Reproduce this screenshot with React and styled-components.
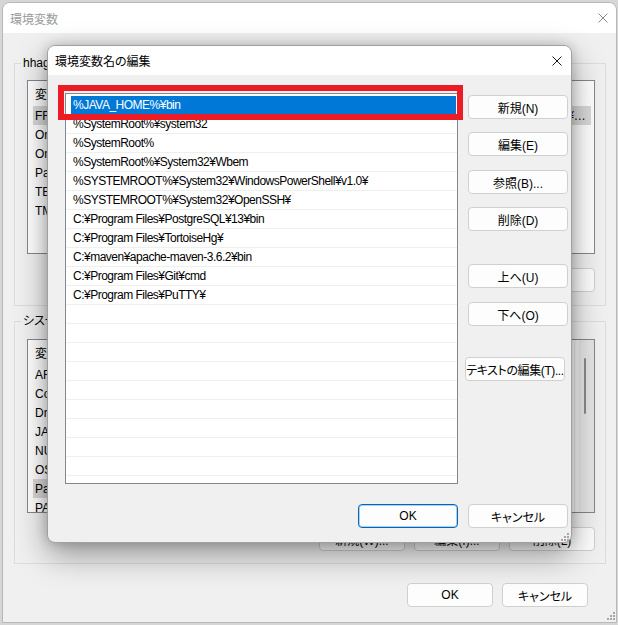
import React from "react";
import styled, { createGlobalStyle } from "styled-components";

const GlobalStyle = createGlobalStyle`
  html, body { margin: 0; padding: 0; }
  body {
    background: #d6d6d6;
    width: 618px;
    height: 625px;
    overflow: hidden;
    font-family: "Liberation Sans", "Noto Sans CJK JP", sans-serif;
    font-size: 12px;
    color: #000;
    font-feature-settings: "palt";
  }
  * { box-sizing: border-box; }
  button { font-feature-settings: "palt"; }
`;

const Desktop = styled.div`
  position: relative;
  width: 618px;
  height: 625px;
  padding: 2px 0 0 2px;
  overflow: hidden;
`;

const Window = styled.div`
  width: 615px;
  height: 621px;
  border: 1px solid #b8b8b8;
  border-radius: 8px 8px 0 0;
  background: #f0f0f0;
  display: flex;
  flex-direction: column;
  overflow: hidden;
  position: relative;
`;

const TitleBar = styled.div`
  flex: none;
  height: ${(p) => p.$h}px;
  background: #fff;
  display: flex;
  align-items: center;
  justify-content: space-between;
  padding: 0 ${(p) => p.$padR}px 0 ${(p) => p.$padL}px;
  color: ${(p) => (p.$inactive ? "#9a9a9a" : "#000")};
  font-family: "Noto Sans CJK JP", sans-serif;
  font-size: 12px;
`;

const WinBody = styled.div`
  flex: 1;
  display: flex;
  flex-direction: column;
  padding: 23px 10px 0 11px;
`;

const Group = styled.fieldset`
  margin: ${(p) => p.$mt}px 0 0;
  padding: ${(p) => p.$pt}px 10px ${(p) => p.$pb}px 12px;
  border: 1px solid #dcdcdc;
  min-width: 0;
  display: flex;
  flex-direction: column;
`;

const Legend = styled.legend`
  margin-left: -6px;
  padding: 0 2px;
  font-size: 12px;
  line-height: 14px;
  font-family: "Liberation Sans", "Noto Sans CJK JP", sans-serif;
`;

const BgList = styled.div`
  height: 174px;
  border: 1px solid #828790;
  background: #fff;
  display: flex;
  overflow: hidden;
`;

const BgListBody = styled.div`
  flex: 1;
  min-width: 0;
  display: flex;
  flex-direction: column;
`;

const BgHeader = styled.div`
  flex: none;
  height: 25px;
  display: flex;
  align-items: center;
  padding-left: 7px;
  font-family: "Noto Sans CJK JP", sans-serif;
`;

const BgRow = styled.div`
  flex: none;
  height: 19px;
  margin: 0 3px 0 5px;
  padding-left: 2px;
  display: flex;
  align-items: center;
  background: ${(p) => (p.$sel ? "#d9d9d9" : "transparent")};
  white-space: nowrap;
`;

const NameCol = styled.div`
  width: 200px;
  flex: none;
  overflow: hidden;
`;

const ValueCol = styled.div`
  flex: 1;
  min-width: 0;
  overflow: hidden;
  text-overflow: ellipsis;
  padding-right: 2px;
`;

const ScrollTrack = styled.div`
  flex: none;
  width: 20px;
  background: linear-gradient(to right, #f7f7f7 0, #f7f7f7 3px, #e8e8e8 4px, #e4e4e4 100%);
  border-left: 1px solid #ececec;
  display: flex;
  justify-content: center;
  padding-top: 18px;
`;

const Thumb = styled.div`
  width: 2px;
  height: 56px;
  border-radius: 1px;
  background: #8a8a8a;
`;

const BtnRow = styled.div`
  display: flex;
  justify-content: flex-end;
  gap: 9px;
  margin-top: ${(p) => p.$mt}px;
  padding-right: ${(p) => p.$pr || 0}px;
`;

const BgButton = styled.button`
  width: 86px;
  height: 24px;
  border: 1px solid #d0d0d0;
  border-radius: 4px;
  background: #fdfdfd;
  font-family: "Liberation Sans", "Noto Sans CJK JP", sans-serif;
  font-size: 12px;
  color: #000;
  padding: 0;
`;

const Dialog = styled.div`
  position: absolute;
  left: 47px;
  top: 45px;
  width: 525px;
  height: 498px;
  border: 1px solid #a0a0a0;
  border-radius: 8px;
  background: #f0f0f0;
  overflow: hidden;
  display: flex;
  flex-direction: column;
  box-shadow: 0 12px 32px rgba(0, 0, 0, 0.38), 0 0 12px rgba(0, 0, 0, 0.18);
`;

const DialogBody = styled.div`
  position: relative;
  flex: 1;
  display: grid;
  grid-template-columns: 393px 100px;
  grid-template-rows: 391px 24px;
  column-gap: 10px;
  row-gap: 20px;
  padding: 18px 0 0 17px;
  align-content: start;
`;

const ListView = styled.div`
  border: 1px solid #828790;
  background: #fff;
  padding-top: 2px;
  overflow: hidden;
  display: flex;
  flex-direction: column;
`;

const PathRow = styled.div`
  flex: none;
  height: 19px;
  border-bottom: 1px solid #efefef;
  display: flex;
`;

const PathCell = styled.div`
  flex: 1;
  height: 18px;
  margin: 0 1px 0 5px;
  padding-left: 2px;
  line-height: 19px;
  white-space: nowrap;
  letter-spacing: -0.5px;
  background: ${(p) => (p.$sel ? "#0078d7" : "transparent")};
  color: ${(p) => (p.$sel ? "#fff" : "#000")};
`;

const ButtonColumn = styled.div`
  display: flex;
  flex-direction: column;
  padding-top: 2px;
`;

const DlgButton = styled.button`
  flex: none;
  width: 100px;
  height: 24px;
  margin-top: ${(p) => p.$mt || 0}px;
  margin-left: ${(p) => p.$shift || 0}px;
  border: 1px solid ${(p) => (p.$primary ? "#0067c0" : "#d0d0d0")};
  box-shadow: ${(p) => (p.$primary ? "inset 0 0 0 1px rgba(0,103,192,0.3)" : "none")};
  border-radius: 4px;
  background: #fdfdfd;
  font-family: "Liberation Sans", "Noto Sans CJK JP", sans-serif;
  font-size: 12px;
  letter-spacing: ${(p) => (p.$tight ? "-0.4px" : "0")};
  color: #000;
  padding: 0;
  white-space: nowrap;
  justify-self: ${(p) => (p.$end ? "end" : "start")};
`;

const Highlight = styled.div`
  position: absolute;
  left: 10px;
  top: 10px;
  width: 405px;
  height: 35px;
  border: 6px solid #ed1c24;
  pointer-events: none;
`;

const Grip = styled.svg`
  position: absolute;
  right: ${(p) => p.$r}px;
  bottom: ${(p) => p.$b}px;
`;

const CloseIcon = ({ color }) => (
  <svg width="10" height="10" viewBox="0 0 10 10">
    <path d="M0.5 0.5 L9.5 9.5 M9.5 0.5 L0.5 9.5" stroke={color} strokeWidth="1" fill="none" />
  </svg>
);

const GripIcon = ({ r, b }) => (
  <Grip $r={r} $b={b} width="8" height="8" viewBox="0 0 8 8">
    {[[6, 0], [3, 3], [6, 3], [0, 6], [3, 6], [6, 6]].map(([x, y]) => (
      <rect key={`${x}-${y}`} x={x} y={y} width="2" height="2" fill="#a6a6a6" />
    ))}
  </Grip>
);

const userVars = [
  ["FREETYPE_DIR", "C:¥Users¥hhaga¥AppData¥Local¥Microsoft¥WindowsApps;C:¥Users¥hhaga¥AppData¥Local¥Programs¥Microsoft VS Code¥bin;C:¥tools¥bin"],
  ["OneDrive", "C:¥Users¥hhaga¥OneDrive"],
  ["OneDriveConsumer", "C:¥Users¥hhaga¥OneDrive"],
  ["Path", "C:¥Users¥hhaga¥AppData¥Local¥Temp"],
  ["TEMP", "C:¥Users¥hhaga¥AppData¥Local¥Temp"],
  ["TMP", "C:¥Users¥hhaga¥AppData¥Local¥Temp"],
];

const sysVars = [
  ["AFLT_HOME", "C:¥aflt"],
  ["ComSpec", "C:¥WINDOWS¥system32¥cmd.exe"],
  ["DriverData", "C:¥Windows¥System32¥Drivers¥DriverData"],
  ["JAVA_HOME", "C:¥Program Files¥Java¥jdk-11"],
  ["NUMBER_OF_PROCESSORS", "8"],
  ["OS", "Windows_NT"],
  ["Path", "%JAVA_HOME%¥bin;%SystemRoot%¥system32"],
  ["PATHEXT", ".COM;.EXE;.BAT;.CMD"],
];

const pathRows = [
  "%JAVA_HOME%¥bin",
  "%SystemRoot%¥system32",
  "%SystemRoot%",
  "%SystemRoot%¥System32¥Wbem",
  "%SYSTEMROOT%¥System32¥WindowsPowerShell¥v1.0¥",
  "%SYSTEMROOT%¥System32¥OpenSSH¥",
  "C:¥Program Files¥PostgreSQL¥13¥bin",
  "C:¥Program Files¥TortoiseHg¥",
  "C:¥maven¥apache-maven-3.6.2¥bin",
  "C:¥Program Files¥Git¥cmd",
  "C:¥Program Files¥PuTTY¥",
];

const allPathRows = [...pathRows, ...Array(21 - pathRows.length).fill("")];

const VarList = ({ rows, selected, scroll }) => (
  <BgList>
    <BgListBody>
      <BgHeader>
        <NameCol>変数</NameCol>
        <ValueCol>値</ValueCol>
      </BgHeader>
      {rows.map(([n, v], i) => (
        <BgRow key={n} $sel={i === selected}>
          <NameCol>{n}</NameCol>
          <ValueCol>{v}</ValueCol>
        </BgRow>
      ))}
    </BgListBody>
    {scroll && (
      <ScrollTrack>
        <Thumb />
      </ScrollTrack>
    )}
  </BgList>
);

export default function App() {
  return (
    <>
      <GlobalStyle />
      <Desktop>
        <Window>
          <TitleBar $h={30} $padL={7} $padR={8} $inactive>
            <span>環境変数</span>
            <CloseIcon color="#8c8c8c" />
          </TitleBar>
          <WinBody>
            <Group $mt={0} $pt={10} $pb={13}>
              <Legend>hhaga のユーザー環境変数(U)</Legend>
              <VarList rows={userVars} selected={0} />
              <BtnRow $mt={14}>
                <BgButton>新規(N)...</BgButton>
                <BgButton>編集(E)...</BgButton>
                <BgButton>削除(D)</BgButton>
              </BtnRow>
            </Group>
            <Group $mt={8} $pt={11} $pb={12}>
              <Legend>システム環境変数(S)</Legend>
              <VarList rows={sysVars} selected={6} scroll />
              <BtnRow $mt={14}>
                <BgButton>新規(W)...</BgButton>
                <BgButton>編集(I)...</BgButton>
                <BgButton>削除(L)</BgButton>
              </BtnRow>
            </Group>
            <BtnRow $mt={19} $pr={18}>
              <BgButton>OK</BgButton>
              <BgButton>キャンセル</BgButton>
            </BtnRow>
          </WinBody>
          <GripIcon r={1} b={2} />
        </Window>

        <Dialog>
          <TitleBar $h={29} $padL={7} $padR={9}>
            <span>環境変数名の編集</span>
            <CloseIcon color="#1a1a1a" />
          </TitleBar>
          <DialogBody>
            <ListView>
              {allPathRows.map((t, i) => (
                <PathRow key={i}>
                  <PathCell $sel={i === 0}>{t}</PathCell>
                </PathRow>
              ))}
            </ListView>
            <ButtonColumn>
              <DlgButton>新規(N)</DlgButton>
              <DlgButton $mt={13}>編集(E)</DlgButton>
              <DlgButton $mt={14}>参照(B)...</DlgButton>
              <DlgButton $mt={13}>削除(D)</DlgButton>
              <DlgButton $mt={33}>上へ(U)</DlgButton>
              <DlgButton $mt={14}>下へ(O)</DlgButton>
              <DlgButton $mt={31} $shift={-3} $tight>テキストの編集(T)...</DlgButton>
            </ButtonColumn>
            <DlgButton $primary $end>OK</DlgButton>
            <DlgButton>キャンセル</DlgButton>
            <Highlight />
          </DialogBody>
          <GripIcon r={2} b={1} />
        </Dialog>
      </Desktop>
    </>
  );
}
